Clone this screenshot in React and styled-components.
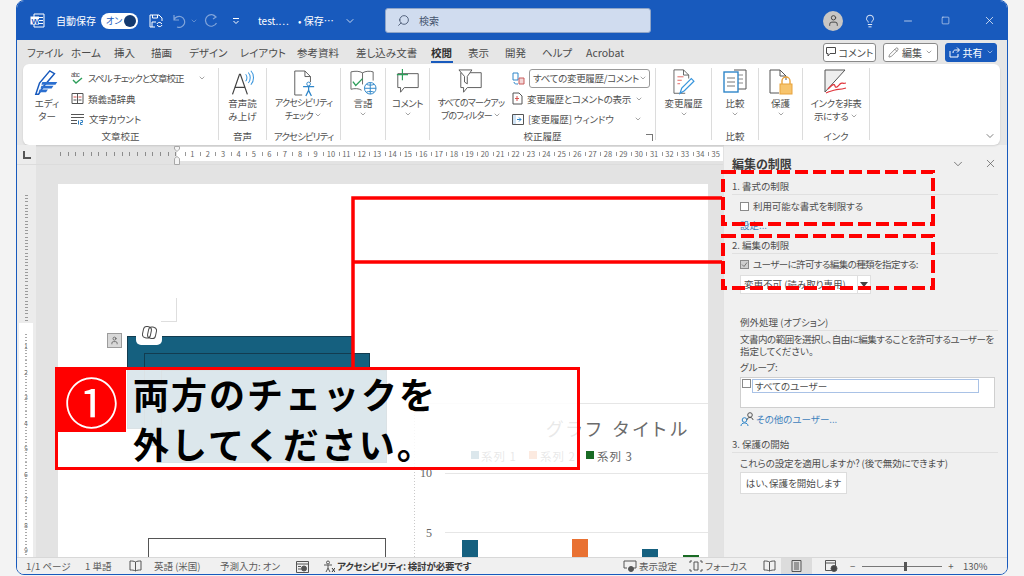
import styled, { createGlobalStyle } from "styled-components";
import { ChevronDown, X, Minus, Square, Lightbulb, Search, Pencil, User } from "lucide-react";

const GlobalStyle = createGlobalStyle`
  html, body {
    margin: 0;
    background: #f3f3f3;
  }
  * {
    box-sizing: border-box;
  }
  body {
    font-family: "Noto Sans CJK JP", "Noto Sans", sans-serif;
    font-feature-settings: "palt";
    color: #4a4a4a;
  }
`;

const Screen = styled.div`
  position: relative;
  width: 1024px;
  height: 576px;
  overflow: hidden;
  padding-left: 16px;
`;

const Window = styled.div`
  width: 992px;
  height: 575px;
  display: flex;
  flex-direction: column;
  border: 1px solid #185abd;
  border-radius: 8px;
  overflow: hidden;
  background: #f0f0f0;
`;

const TitleBar = styled.div`
  height: 39px;
  flex: none;
  display: flex;
  align-items: center;
  padding-left: 13px;
  background: #185abd;
  color: #fff;
  font-size: 10px;
`;

const Slot = styled.div`
  flex: none;
  width: ${(p) => p.$w}px;
  display: flex;
  align-items: center;
  white-space: nowrap;
  opacity: ${(p) => p.$dim || 1};
`;

const Spacer = styled.div`
  flex: 1;
`;

const Toggle = styled.div`
  width: 37px;
  height: 16px;
  border-radius: 8px;
  background: #fff;
  color: #185abd;
  font-size: 9px;
  display: flex;
  align-items: center;
  justify-content: space-between;
  padding: 0 2px 0 5px;
`;

const Knob = styled.span`
  width: 12px;
  height: 12px;
  border-radius: 50%;
  background: #143a70;
`;

const SearchBox = styled.div`
  flex: none;
  width: 266px;
  height: 25px;
  margin-right: 172px;
  display: flex;
  align-items: center;
  gap: 9px;
  padding-left: 11px;
  background: #d0dcef;
  border: 1px solid #8fa5c7;
  border-radius: 3px;
  color: #44546e;
  font-size: 10px;
`;

const Avatar = styled.div`
  width: 20px;
  height: 20px;
  border-radius: 50%;
  background: #c8c6c4;
  color: #444;
  display: flex;
  align-items: center;
  justify-content: center;
`;

const Chrome = styled.div`
  flex: none;
  background: #e6e6e6;
`;

const TabRow = styled.div`
  height: 24px;
  display: flex;
  align-items: center;
  padding-left: 10px;
  font-size: 10.5px;
  color: #4c4c4c;
`;

const Tab = styled.div`
  flex: none;
  width: ${(p) => p.$w}px;
  position: relative;
  white-space: nowrap;
  font-weight: ${(p) => (p.$active ? 700 : 400)};
  color: ${(p) => (p.$active ? "#2f2f2f" : "inherit")};

  ${(p) =>
    p.$active &&
    `&::after {
      content: "";
      position: absolute;
      left: 0;
      bottom: -3px;
      width: 22px;
      height: 2px;
      background: #185abd;
    }`}
`;

const TabActions = styled.div`
  margin-left: auto;
  margin-right: 10px;
  display: flex;
  gap: 7px;
`;

const ActionButton = styled.div`
  width: ${(p) => p.$w}px;
  height: 19px;
  display: flex;
  align-items: center;
  justify-content: center;
  gap: 3px;
  font-size: 10px;
  border-radius: 3px;
  background: ${(p) => (p.$primary ? "#185abd" : "#fff")};
  color: ${(p) => (p.$primary ? "#fff" : "#4a4a4a")};
  border: 1px solid ${(p) => (p.$primary ? "#185abd" : "#8a8a8a")};
`;

const Ribbon = styled.div`
  height: 81px;
  width: 977px;
  margin-left: 6px;
  display: flex;
  position: relative;
  padding: 4px 0 2px;
  background: #fff;
  border-radius: 6px;
  box-shadow: 0 1px 2px rgba(0, 0, 0, 0.12);
`;

const Group = styled.div`
  flex: none;
  width: ${(p) => p.$w}px;
  margin-bottom: 3px;
  display: flex;
  flex-direction: column;
  border-right: ${(p) => (p.$last ? "none" : "1px solid #dcdcdc")};
  position: relative;
`;

const GroupBody = styled.div`
  flex: 1;
  display: flex;
  justify-content: ${(p) => p.$justify || "center"};
  min-height: 0;
`;

const GroupLabel = styled.div`
  height: 13px;
  margin-bottom: -3px;
  line-height: 13px;
  font-size: 9.5px;
  letter-spacing: ${(p) => p.$ls || 0}px;
  text-align: center;
  white-space: nowrap;
  color: #4f4f4f;
`;

const BigButton = styled.div`
  flex: none;
  width: ${(p) => p.$w || 44}px;
  display: flex;
  flex-direction: column;
  align-items: center;
  font-size: ${(p) => p.$size || 9.5}px;
  letter-spacing: ${(p) => p.$ls || 0}px;
  line-height: 12.5px;
  text-align: center;
  white-space: nowrap;
  color: #4f4f4f;
`;

const BigIcon = styled.div`
  height: 29px;
  display: flex;
  align-items: flex-start;
  justify-content: center;
  padding-top: 1px;
`;

const ToolList = styled.div`
  flex: 1;
  display: flex;
  flex-direction: column;
`;

const ToolRow = styled.div`
  height: 20.5px;
  display: flex;
  align-items: center;
  gap: 4px;
  font-size: 9.5px;
  letter-spacing: ${(p) => p.$ls || 0}px;
  white-space: nowrap;
  color: #4f4f4f;
`;

const ToolChevron = styled.span`
  margin-left: auto;
  margin-right: ${(p) => p.$mr || 10}px;
  display: flex;
`;

const Dropdown = styled.div`
  width: 121px;
  height: 19px;
  display: flex;
  align-items: center;
  justify-content: space-between;
  padding: 0 2px 0 3px;
  border: 1px solid #9a9a9a;
  border-radius: 3px;
`;

const Launcher = styled.div`
  position: absolute;
  right: 2px;
  bottom: -1px;
  width: 7px;
  height: 7px;
  border-left: 1px solid #777;
  border-bottom: 1px solid #777;
  transform: rotate(180deg);
`;

const RibbonCollapse = styled.div`
  position: absolute;
  right: 4px;
  bottom: 3px;
  display: flex;
  color: #555;
`;

const Main = styled.div`
  flex: 1;
  min-height: 0;
  display: flex;
`;

const DocArea = styled.div`
  flex: 1;
  min-width: 0;
  display: flex;
  flex-direction: column;
  background: #e3e3e3;
`;

const RulerRow = styled.div`
  height: 20px;
  flex: none;
  display: flex;
  align-items: flex-start;
  padding-top: 2px;
  position: relative;
  border-bottom: 1px solid #dcdcdc;
`;

const RulerCorner = styled.div`
  width: 19px;
  height: 19px;
  margin: -2px 24px 0 0;
  display: flex;
  align-items: center;
  justify-content: center;
  background: #ececec;

  &::after {
    content: "";
    width: 6px;
    height: 6px;
    border-left: 2px solid #555;
    border-bottom: 2px solid #555;
  }
`;

const RulerMargin = styled.div`
  width: 117px;
  height: 14px;
  flex: none;
  background: repeating-linear-gradient(90deg, #8c8c8c 0 1px, transparent 1px 7.7px) center / 100% 4px no-repeat;
`;

const RulerActive = styled.div`
  flex: 1;
  height: 14px;
  display: flex;
  padding-left: 7.7px;
  overflow: hidden;
  background: #fff;
`;

const RulerCell = styled.div`
  flex: none;
  width: 15.4px;
  text-align: center;
  font-size: 7.5px;
  line-height: 14px;
  color: #666;
  background: linear-gradient(#999, #999) 0 center / 1px 4px no-repeat;
`;

const IndentMark = styled.svg`
  position: absolute;
  left: 155px;
  top: 0;
`;

const DocBody = styled.div`
  flex: 1;
  min-height: 0;
  display: flex;
`;

const VRuler = styled.div`
  flex: none;
  width: 19px;
  margin-right: 22px;
  padding: 30px 3px 0 2px;
  display: flex;
  flex-direction: column;
  background: #ececec;
`;

const VRulerMargin = styled.div`
  height: 128px;
  flex: none;
  background: repeating-linear-gradient(#9a9a9a 0 1px, transparent 1px 3.2px) center / 3px 100% no-repeat;
`;

const VRulerActive = styled.div`
  flex: 1;
  background: #fff;
  display: flex;
  flex-direction: column;
  padding-top: 11px;
`;

const VRulerCell = styled.div`
  height: 25.5px;
  flex: none;
  font-size: 7px;
  line-height: 25.5px;
  text-align: center;
  color: #777;
  background: repeating-linear-gradient(#a8a8a8 0 1px, transparent 1px 3.2px) center / 2px 100% no-repeat;
`;

const PageWrap = styled.div`
  flex: 1;
  min-width: 0;
  padding: 19px 15px 0 0;
`;

const Page = styled.div`
  position: relative;
  height: 100%;
  background: #fff;
  overflow: hidden;
`;

const CropMark = styled.div`
  position: absolute;
  left: 103px;
  top: 114px;
  width: 16px;
  height: 24px;
  border-right: 1px solid #dedede;
  border-bottom: 1px solid #dedede;
`;

const LayoutIcon = styled.div`
  position: absolute;
  left: 49px;
  top: 149px;
  width: 15px;
  height: 15px;
  background: #d8d8d8;
  border: 1px solid #9c9c9c;
  display: flex;
  align-items: center;
  justify-content: center;
  color: #555;
`;

const StackShape = styled.div`
  position: absolute;
  left: ${(p) => 69 + p.$step * 17}px;
  top: ${(p) => 152 + p.$step * 17}px;
  width: 226px;
  height: 93px;
  background: #15607f;
  border: 1px solid #123c50;
`;

const CopilotTab = styled.div`
  position: absolute;
  left: 78px;
  top: 150px;
  width: 26px;
  height: 11px;
  background: #fff;
  border-radius: 0 0 5px 5px;
`;

const CopilotIcon = styled.svg`
  position: absolute;
  left: 84px;
  top: 141px;
`;

const LowerShape = styled.div`
  position: absolute;
  left: 90px;
  top: 354px;
  width: 238px;
  height: 40px;
  border: 1.5px solid #555;
`;

const ChartFrame = styled.svg`
  position: absolute;
  left: 356px;
  top: 219px;
`;

const Pane = styled.div`
  flex: none;
  width: 284px;
  padding: 10px 9px 0 8px;
  background: #f0f0f0;
  border-left: 1px solid #e2e2e2;
  font-size: 9.5px;
  color: #4d4d4d;
`;

const PaneHeader = styled.div`
  height: 17px;
  display: flex;
  align-items: center;
  color: #3c3c3c;
  font-size: 12px;
  font-weight: 700;
`;

const PaneTools = styled.div`
  margin-left: auto;
  margin-right: 1px;
  display: flex;
  gap: 19px;
  color: #555;
`;

const SectionHead = styled.div`
  margin-top: ${(p) => p.$mt}px;
  height: 15px;
  line-height: 13px;
  font-size: 9.5px;
  border-bottom: 1px solid #e0e0e0;
  white-space: nowrap;
`;

const Indented = styled.div`
  padding-left: 8px;
  margin-top: ${(p) => p.$mt || 0}px;
  line-height: 12px;
  letter-spacing: ${(p) => p.$ls || 0}px;
  white-space: nowrap;
`;

const SubHead = styled(SectionHead)`
  margin-left: 8px;
`;

const CheckRow = styled(Indented)`
  display: flex;
  align-items: center;
  gap: 4px;
`;

const CheckBox = styled.span`
  flex: none;
  width: 9px;
  height: 9px;
  display: flex;
  align-items: center;
  justify-content: center;
  background: ${(p) => (p.$checked ? "#cfcfcf" : "#fff")};
  border: 1px solid #8a8a8a;
  color: #777;
`;

const PaneLink = styled(Indented)`
  color: #3f82bd;
`;

const SelectBox = styled.div`
  margin: 5px 0 0 8px;
  width: 131px;
  height: 19px;
  display: flex;
  background: #fff;
  border: 1px solid #dfdfdf;
  line-height: 17px;
  padding-left: 3px;
  white-space: nowrap;
`;

const SelectArrow = styled.span`
  margin-left: auto;
  width: 13px;
  display: flex;
  align-items: center;
  justify-content: center;
  border-left: 1px solid #dfdfdf;

  &::after {
    content: "";
    border: 4px solid transparent;
    border-top: 5px solid #444;
    border-bottom: 0;
  }
`;

const GroupBox = styled.div`
  margin: 4px 3px 0 8px;
  height: 31px;
  display: flex;
  align-items: flex-start;
  gap: 1px;
  padding: 1px 15px 0 1px;
  background: #fff;
  border: 1px solid #cfcfcf;
`;

const GroupInput = styled.div`
  flex: 1;
  height: 14px;
  line-height: 12px;
  padding-left: 2px;
  border: 1px solid #a9c2e6;
`;

const UsersLink = styled(PaneLink)`
  display: flex;
  align-items: center;
  gap: 1px;
`;

const PaneButton = styled.div`
  margin: 3px 0 0 8px;
  width: 107px;
  height: 22px;
  line-height: 20px;
  text-align: center;
  background: #fff;
  border: 1px solid #dcdcdc;
  white-space: nowrap;
`;

const StatusBar = styled.div`
  height: 17px;
  flex: none;
  display: flex;
  align-items: center;
  padding-left: 9px;
  background: #f0f0f0;
  border-top: 1px solid #d8d8d8;
  font-size: 9.5px;
  color: #5a5a5a;
`;

const StatusItem = styled.div`
  flex: ${(p) => (p.$w ? "none" : "1")};
  width: ${(p) => (p.$w ? `${p.$w}px` : "auto")};
  height: 100%;
  display: flex;
  align-items: center;
  gap: 2px;
  white-space: nowrap;
  font-weight: ${(p) => (p.$bold ? 700 : 400)};
  letter-spacing: ${(p) => (p.$bold ? -0.2 : 0)}px;
  color: ${(p) => (p.$bold ? "#3a3a3a" : "inherit")};
`;

const ViewTile = styled(StatusItem)`
  justify-content: center;
  background: ${(p) => (p.$active ? "#dcdcdc" : "transparent")};
`;

const ZoomTrack = styled.div`
  flex: none;
  width: 80px;
  height: 1px;
  margin: 0 4px 0 5px;
  position: relative;
  background: #777;
`;

const ZoomThumb = styled.span`
  position: absolute;
  left: 42px;
  top: -4px;
  width: 3px;
  height: 9px;
  background: #555;
`;

const Overlay = styled.svg`
  position: absolute;
  left: 0;
  top: 0;
  pointer-events: none;
`;

const Callout = styled.div`
  position: absolute;
  left: 55px;
  top: 367px;
  width: 525px;
  height: 103px;
  display: flex;
  align-items: flex-start;
  background: rgba(255, 255, 255, 0.85);
  border: 3px solid #ff0000;
`;

const CalloutNumber = styled.div`
  flex: none;
  width: 69px;
  height: 63px;
  margin: -1px 0 0 -1px;
  display: flex;
  align-items: center;
  justify-content: center;
  background: #ff0000;
  color: #fff;
  font-size: 54px;
  line-height: 1;
`;

const CalloutText = styled.div`
  margin-top: -2px;
  padding-left: 7px;
  color: #000;
  font-size: 36px;
  font-weight: 700;
  line-height: 50px;
  letter-spacing: 2px;
  white-space: nowrap;
  font-feature-settings: normal;
`;

const Chev = ({ size = 9, color = "#555" }) => <ChevronDown size={size} color={color} strokeWidth={1.6} />;

const WordLogo = () => (
  <svg width="15" height="15" viewBox="0 0 15 15">
    <path d="M4 1h10v13H4z" fill="#185abd" stroke="#fff" />
    <path d="M9 4.500h4M9 7.500h4M9 10.500h4" stroke="#fff" />
    <rect x="0.500" y="3.500" width="8.500" height="8" fill="#fff" />
    <text x="1.500" y="10.500" fontSize="8" fontWeight="700" fill="#185abd" fontFamily="Liberation Sans">W</text>
  </svg>
);

const SaveIcon = () => (
  <svg width="14" height="14" viewBox="0 0 14 14" fill="none" stroke="#fff" strokeWidth="1">
    <path d="M1 1h9l3 3v3M1 1v12h5M3.500 1v3h5V1M3 13V8h4" />
    <path d="M8 10a2.500 2.500 0 0 1 4-1l1 1M13 11a2.500 2.500 0 0 1-4 1l-1-1" />
  </svg>
);

const UndoIcon = () => (
  <svg width="13" height="14" viewBox="0 0 13 14" fill="none" stroke="#fff" strokeWidth="1.2">
    <path d="M1 1v5h5M1 6a5.500 5.500 0 1 1 3 7" />
  </svg>
);

const RedoIcon = () => (
  <svg width="14" height="14" viewBox="0 0 14 14" fill="none" stroke="#fff" strokeWidth="1.200">
    <path d="M9 1l3 2-3 2M12 3A5.800 5.800 0 1 0 12.500 9" />
  </svg>
);

const QatIcon = () => (
  <svg width="8" height="8" viewBox="0 0 8 8" fill="none" stroke="#fff">
    <path d="M1 1.500h6M1.500 4L4 6.500 6.500 4" />
  </svg>
);

const EditorIcon = () => (
  <svg width="28" height="28" viewBox="0 0 28 30" fill="none">
    <path d="M2 27L6 15 17 2l5 3-12 14-5 8z" stroke="#185abd" strokeWidth="1.600" />
    <path d="M9 14h16l-2 3H8zM8 18h13l-2 3H7zM6 22h9l-2 3H5z" fill="#2b6fd0" />
  </svg>
);

const SpellIcon = () => (
  <svg width="13" height="14" viewBox="0 0 13 14" fill="none">
    <text x="0" y="6" fontSize="6.500" fill="#555" fontFamily="Liberation Sans">abc</text>
    <path d="M2 9l3 3 6-5" stroke="#2e9e5b" strokeWidth="1.400" />
  </svg>
);

const ThesaurusIcon = () => (
  <svg width="13" height="13" viewBox="0 0 13 13" fill="none" stroke="#555">
    <path d="M1 1.500h11v10H1zM6.500 1.500v10" />
    <path d="M2.500 5h3M7.500 5h3" stroke="#d9534f" />
    <path d="M2.500 8h3M7.500 8h3" />
  </svg>
);

const CountIcon = () => (
  <svg width="14" height="13" viewBox="0 0 14 13" fill="none" stroke="#555">
    <path d="M0 1.500h13M0 4.500h13M0 7.500h6M0 10.500h6" />
    <path d="M7.500 7.500v4M9.500 7.500h2v2h-2v2h2" stroke="#2f7fc1" />
  </svg>
);

const SpeakIcon = () => (
  <svg width="26" height="28" viewBox="0 0 28 32" fill="none">
    <path d="M2 29L10 6h1l8 23M5 21h11" stroke="#444" strokeWidth="1.400" />
    <path d="M17 6c2 2 2 6 0 8M20 4c3 3 3 9 0 12M23 2c4 4 4 12 0 16" stroke="#3a96dd" strokeWidth="1.200" />
  </svg>
);

const AccessIcon = () => (
  <svg width="24" height="28" viewBox="0 0 26 30" fill="none">
    <path d="M11 28H3V2h11l6 6v6M14 2v6h6" stroke="#555" />
    <circle cx="18" cy="16" r="2" stroke="#2f86c9" />
    <path d="M12 19h12M18 19v4l-3 6M18 23l3 6" stroke="#2f86c9" strokeWidth="1.400" />
  </svg>
);

const LanguageIcon = () => (
  <svg width="27" height="27" viewBox="0 0 28 28" fill="none">
    <path d="M13 4C10 2 5 2 1 3v18c4-1 8-1 11 1M13 4c3-2 8-2 11-1v9M13 4v12" stroke="#666" />
    <path d="M3 13l3 4 7-7" stroke="#2e9e5b" strokeWidth="1.400" />
    <circle cx="21" cy="20" r="6" fill="#fff" stroke="#2f86c9" />
    <path d="M15 20h12M21 14v12M17 16c3 1 5 1 8 0M17 24c3-1 5-1 8 0" stroke="#2f86c9" />
  </svg>
);

const CommentIcon = () => (
  <svg width="26" height="26" viewBox="0 0 28 28" fill="none">
    <path d="M3 5h22v15H10l-4 5v-5H3z" stroke="#555" />
    <path d="M8 0v12M2 6h12" stroke="#2e9e5b" strokeWidth="1.300" />
  </svg>
);

const FilterIcon = () => (
  <svg width="26" height="26" viewBox="0 0 28 28" fill="none">
    <path d="M3 4h22v16H10l-4 5v-5H3z" stroke="#555" />
    <path d="M1 1h14l-5 7v8l-3-2V8z" fill="#fff" stroke="#555" />
  </svg>
);

const TrackIcon = () => (
  <svg width="23" height="26" viewBox="0 0 24 30" fill="none">
    <path d="M14 28H1V1h11l6 6v4M12 1v6h6" stroke="#555" />
    <path d="M5 9h7M5 13h5M5 17h3" stroke="#e0544f" />
    <path d="M8 28l2-6 11-11 3 3-11 11z" fill="#fff" stroke="#3a96dd" strokeWidth="1.400" />
  </svg>
);

const CompareIcon = () => (
  <svg width="24" height="24" viewBox="0 0 24 24" fill="none">
    <path d="M11 1h12v19H15" stroke="#555" />
    <path d="M15 6h5M15 10h5M15 14h5" stroke="#888" />
    <rect x="1" y="3" width="14" height="20" fill="#fff" stroke="#2f86c9" strokeWidth="1.400" />
    <path d="M4 9h8M4 13h8M4 17h8" stroke="#777" />
  </svg>
);

const ProtectIcon = () => (
  <svg width="24" height="26" viewBox="0 0 24 26" fill="none">
    <path d="M10 24H1V1h10l6 6v4M11 1v6h6" stroke="#555" />
    <path d="M13 15v-3a4 4 0 0 1 8 0v3" stroke="#e8a33d" strokeWidth="1.400" />
    <rect x="11" y="15" width="12" height="10" fill="#f7c46c" stroke="#e8a33d" />
  </svg>
);

const InkIcon = () => (
  <svg width="26" height="26" viewBox="0 0 26 26" fill="none">
    <path d="M2 1h20L2 23z" fill="#eee" stroke="#555" />
    <path d="M5 20c4-4 6-6 7-3s3 0 5-2 2 0 6-1M3 24c4-2 6-2 9-3s4 0 11-2" stroke="#e0343b" strokeWidth="1.200" />
  </svg>
);

const TrackSmallIcon = () => (
  <svg width="13" height="13" viewBox="0 0 13 13" fill="none">
    <path d="M1 1h5v7H1z" stroke="#2f86c9" />
    <path d="M7 6h5v6H7z" fill="#f3d6d6" stroke="#c85a5a" />
    <path d="M2 10c0 2 2 2 4 2" stroke="#2f86c9" />
  </svg>
);

const DocMarkIcon = () => (
  <svg width="11" height="13" viewBox="0 0 11 13" fill="none">
    <path d="M1 1h6l3 3v8H1z" stroke="#555" />
    <path d="M5 4v5M3 6.500h4" stroke="#d9534f" />
  </svg>
);

const PaneIcon = () => (
  <svg width="12" height="11" viewBox="0 0 12 11" fill="none">
    <path d="M.5.500h11v10H.5z" stroke="#555" />
    <path d="M1 1h3v9H1z" fill="#cfe3f5" />
    <path d="M5 5.500h4M7 3.500l2 2-2 2" stroke="#2f86c9" />
  </svg>
);

const CopilotGlyph = () => (
  <CopilotIcon width="15" height="15" viewBox="0 0 15 15" fill="none" stroke="#4a4a4a" strokeWidth="1">
    <rect x="1" y="1.500" width="8" height="11.500" rx="3.500" transform="rotate(12 5 7)" />
    <rect x="6" y="2" width="8" height="11.500" rx="3.500" transform="rotate(12 10 8)" />
  </CopilotIcon>
);

const BookIcon = ({ stroke = "#555" }) => (
  <svg width="13" height="12" viewBox="0 0 13 12" fill="none" stroke={stroke}>
    <path d="M6.500 2C5 1 3 1 1 1v9c2 0 4 0 5.500 1C8 10 10 10 12 10V1c-2 0-4 0-5.500 1zM6.500 2v9" />
  </svg>
);

const MacroIcon = () => (
  <svg width="13" height="13" viewBox="0 0 13 13" fill="none" stroke="#555">
    <path d="M.5 1.500h12v11H.5zM.5 4h12" />
    <circle cx="8" cy="8.500" r="2.500" fill="#555" />
    <path d="M2 6.500h3M2 9h3" />
  </svg>
);

const AccessStatusIcon = () => (
  <svg width="12" height="13" viewBox="0 0 12 13" fill="none" stroke="#555">
    <circle cx="5" cy="2.500" r="1.500" />
    <path d="M1 5h8M5 5v3L3 12M5 8l2 4" />
    <path d="M9 8l3 4M12 8l-3 4" stroke="#333" />
  </svg>
);

const DisplayIcon = () => (
  <svg width="14" height="12" viewBox="0 0 14 12" fill="none" stroke="#555">
    <path d="M1 1h12v7H7M1 1v7h3" />
    <circle cx="8" cy="9" r="2.500" fill="#555" />
  </svg>
);

const FocusIcon = () => (
  <svg width="14" height="12" viewBox="0 0 14 12" fill="none" stroke="#555">
    <path d="M1 3V1h2M11 1h2v2M13 9v2h-2M3 11H1V9" />
    <path d="M5 2h4v8H5z" />
  </svg>
);

const PrintIcon = () => (
  <svg width="11" height="12" viewBox="0 0 11 12" fill="none" stroke="#555">
    <path d="M1 .500h9v11H1zM3 3h5M3 5h5M3 7h5M3 9h5" />
  </svg>
);

const WebIcon = () => (
  <svg width="13" height="12" viewBox="0 0 13 12" fill="none" stroke="#555">
    <path d="M.5.500h10v10H.5zM.5 3h10" />
    <circle cx="9" cy="8.500" r="3" fill="#444" />
  </svg>
);

const UsersIcon = () => (
  <svg width="15" height="14" viewBox="0 0 15 14" fill="none">
    <circle cx="4.500" cy="8" r="2.300" stroke="#2f86c9" />
    <path d="M1 14c0-2 1.500-3 3.500-3S8 12 8 14" stroke="#2f86c9" />
    <circle cx="10" cy="3" r="2.300" stroke="#555" />
    <path d="M7 8c0-1.500 1.300-2.500 3-2.500s3 1 3 2.500" stroke="#555" />
  </svg>
);

const TABS = [
  ["ファイル", 44], ["ホーム", 43], ["挿入", 37], ["描画", 38], ["デザイン", 51], ["レイアウト", 57],
  ["参考資料", 59], ["差し込み文書", 75], ["校閲", 37], ["表示", 37], ["開発", 37], ["ヘルプ", 44], ["Acrobat", 50],
];

const rulerNumbers = Array.from({ length: 35 }, (_, i) => i + 1);
const vRulerNumbers = [1, 2, 3, 4, 5, 6, 7, 8, 9];

function Chart() {
  return (
    <ChartFrame width="294" height="154" viewBox="0 0 294 154" fontFamily="Noto Sans CJK JP, sans-serif">
      <path d="M0 .500H294" stroke="#e6e6e6" />
      <path d="M.500 0V154" stroke="#c9c9c9" strokeDasharray="1 2" />
      <text x="132" y="33" fontSize="18" letterSpacing="4" fill="#6b6b6b">グラフ タイトル</text>
      <rect x="57" y="48" width="8" height="8" fill="#15607f" />
      <text x="67" y="58" fontSize="11.500" letterSpacing="1" fill="#666">系列 1</text>
      <rect x="115" y="48" width="8" height="8" fill="#e97132" />
      <text x="126" y="58" fontSize="11.500" letterSpacing="1" fill="#666">系列 2</text>
      <rect x="172" y="48" width="8" height="8" fill="#196b24" />
      <text x="183" y="58" fontSize="11.500" letterSpacing="1" fill="#666">系列 3</text>
      <text x="6" y="74" fontSize="12" fill="#666" fontFamily="Liberation Serif">10</text>
      <text x="12" y="134" fontSize="12" fill="#666" fontFamily="Liberation Serif">5</text>
      <path d="M31 70.500H294M31 129.500H294" stroke="#e6e6e6" />
      <rect x="48" y="137" width="16" height="20" fill="#15607f" />
      <rect x="158" y="136" width="16" height="20" fill="#e97132" />
      <rect x="228" y="146" width="16" height="10" fill="#15607f" />
      <rect x="269" y="152" width="16" height="4" fill="#196b24" />
    </ChartFrame>
  );
}

export default function App() {
  return (
    <Screen>
      <GlobalStyle />
      <Window>
        <TitleBar>
          <Slot $w={26}><WordLogo /></Slot>
          <Slot $w={45}>自動保存</Slot>
          <Slot $w={48}>
            <Toggle>オン<Knob /></Toggle>
          </Slot>
          <Slot $w={24}><SaveIcon /></Slot>
          <Slot $w={17} $dim={0.45}><UndoIcon /></Slot>
          <Slot $w={14} $dim={0.45}><ChevronDown size={8} /></Slot>
          <Slot $w={28} $dim={0.45}><RedoIcon /></Slot>
          <Slot $w={26}><QatIcon /></Slot>
          <Slot $w={40}>test.…</Slot>
          <Slot $w={46}>• 保存…</Slot>
          <Slot $w={41}><ChevronDown size={12} strokeWidth={1.5} /></Slot>
          <SearchBox>
            <Search size={13} strokeWidth={1.6} style={{ transform: "scaleX(-1)" }} />
            検索
          </SearchBox>
          <Slot $w={37}>
            <Avatar><User size={13} strokeWidth={1.8} /></Avatar>
          </Slot>
          <Slot $w={39}><Lightbulb size={14} strokeWidth={1.5} style={{ marginLeft: 3 }} /></Slot>
          <Slot $w={39}><Minus size={12} strokeWidth={1.3} style={{ marginLeft: 3 }} /></Slot>
          <Slot $w={42}><Square size={9} strokeWidth={1.4} style={{ marginLeft: 3 }} /></Slot>
          <Slot $w={20}><X size={13} strokeWidth={1.3} style={{ marginLeft: 3 }} /></Slot>
          <Spacer />
        </TitleBar>

        <Chrome>
          <TabRow>
            {TABS.map(([label, w]) => (
              <Tab key={label} $w={w} $active={label === "校閲"}>{label}</Tab>
            ))}
            <TabActions>
              <ActionButton $w={53}>
                <svg width="10" height="10" viewBox="0 0 10 10" fill="none" stroke="#4a4a4a">
                  <path d="M.5.500h9v6H4L2 9V6.500H.5z" />
                </svg>
                コメント
              </ActionButton>
              <ActionButton $w={55}>
                <Pencil size={11} strokeWidth={1.3} />編集<Chev size={8} />
              </ActionButton>
              <ActionButton $w={52} $primary>
                <svg width="11" height="11" viewBox="0 0 11 11" fill="none" stroke="#fff">
                  <path d="M8 .5l2.500 2.500L8 5.500M10 3H6.500C5 3 4 4 4 6M1 4v6h8V7" />
                </svg>
                共有<Chev size={8} color="#fff" />
              </ActionButton>
            </TabActions>
          </TabRow>

          <Ribbon>
            <Group $w={196}>
              <GroupBody $justify="flex-start">
                <BigButton $w={48}>
                  <BigIcon><EditorIcon /></BigIcon>
                  エディ<br />ター
                </BigButton>
                <ToolList>
                  <ToolRow $ls={-0.9}><SpellIcon />スペル チェックと文章校正<ToolChevron $mr={12}><Chev size={8} /></ToolChevron></ToolRow>
                  <ToolRow><ThesaurusIcon />類義語辞典</ToolRow>
                  <ToolRow><CountIcon />文字カウント</ToolRow>
                </ToolList>
              </GroupBody>
              <GroupLabel>文章校正</GroupLabel>
            </Group>

            <Group $w={48}>
              <GroupBody>
                <BigButton>
                  <BigIcon><SpeakIcon /></BigIcon>
                  音声読<br />み上げ
                </BigButton>
              </GroupBody>
              <GroupLabel>音声</GroupLabel>
            </Group>

            <Group $w={74}>
              <GroupBody>
                <BigButton $w={70} $size={9} $ls={-0.7}>
                  <BigIcon><AccessIcon /></BigIcon>
                  アクセシビリティ<br /><span>チェック <Chev size={8} /></span>
                </BigButton>
              </GroupBody>
              <GroupLabel $ls={-0.9}>アクセシビリティ</GroupLabel>
            </Group>

            <Group $w={45}>
              <GroupBody>
                <BigButton>
                  <BigIcon><LanguageIcon /></BigIcon>
                  言語<br /><Chev size={8} />
                </BigButton>
              </GroupBody>
              <GroupLabel>&nbsp;</GroupLabel>
            </Group>

            <Group $w={44}>
              <GroupBody>
                <BigButton $ls={-0.5}>
                  <BigIcon><CommentIcon /></BigIcon>
                  コメント<br /><Chev size={8} />
                </BigButton>
              </GroupBody>
              <GroupLabel>&nbsp;</GroupLabel>
            </Group>

            <Group $w={226}>
              <GroupBody $justify="flex-start">
                <BigButton $w={82} $size={9} $ls={-0.8}>
                  <BigIcon><FilterIcon /></BigIcon>
                  すべてのマークアッ<br /><span>プのフィルター <Chev size={8} /></span>
                </BigButton>
                <ToolList>
                  <ToolRow $ls={-0.3}>
                    <TrackSmallIcon />
                    <Dropdown>すべての変更履歴/コメント<Chev size={8} /></Dropdown>
                  </ToolRow>
                  <ToolRow $ls={-0.3}><DocMarkIcon />変更履歴とコメントの表示<ToolChevron $mr={14}><Chev size={8} /></ToolChevron></ToolRow>
                  <ToolRow $ls={-0.1}><PaneIcon />[変更履歴] ウィンドウ<ToolChevron $mr={15}><Chev size={8} /></ToolChevron></ToolRow>
                </ToolList>
              </GroupBody>
              <GroupLabel>校正履歴</GroupLabel>
              <Launcher />
            </Group>

            <Group $w={56}>
              <GroupBody>
                <BigButton>
                  <BigIcon><TrackIcon /></BigIcon>
                  変更履歴<br /><Chev size={8} />
                </BigButton>
              </GroupBody>
              <GroupLabel>&nbsp;</GroupLabel>
            </Group>

            <Group $w={47}>
              <GroupBody>
                <BigButton>
                  <BigIcon><CompareIcon /></BigIcon>
                  比較<br /><Chev size={8} />
                </BigButton>
              </GroupBody>
              <GroupLabel>比較</GroupLabel>
            </Group>

            <Group $w={44}>
              <GroupBody>
                <BigButton>
                  <BigIcon><ProtectIcon /></BigIcon>
                  保護<br /><Chev size={8} />
                </BigButton>
              </GroupBody>
              <GroupLabel>&nbsp;</GroupLabel>
            </Group>

            <Group $w={67}>
              <GroupBody>
                <BigButton $w={62} $ls={-0.4}>
                  <BigIcon><InkIcon /></BigIcon>
                  インクを非表<br /><span>示にする <Chev size={8} /></span>
                </BigButton>
              </GroupBody>
              <GroupLabel>インク</GroupLabel>
            </Group>

            <RibbonCollapse><ChevronDown size={12} strokeWidth={1.5} /></RibbonCollapse>
          </Ribbon>
        </Chrome>

        <Main>
          <DocArea>
            <RulerRow>
              <RulerCorner />
              <RulerMargin />
              <RulerActive>
                {rulerNumbers.map((n) => (
                  <RulerCell key={n}>{n}</RulerCell>
                ))}
              </RulerActive>
              <IndentMark width="10" height="20" viewBox="0 0 10 20" fill="#f4f4f4" stroke="#a8a8a8">
                <path d="M2.500 1.500h5V4L5 6.500 2.500 4zM2.500 19.500v-6L5 11.500l2.500 2v6z" />
              </IndentMark>
            </RulerRow>
            <DocBody>
              <VRuler>
                <VRulerMargin />
                <VRulerActive>
                  {vRulerNumbers.map((n) => (
                    <VRulerCell key={n}>{n}</VRulerCell>
                  ))}
                </VRulerActive>
              </VRuler>
              <PageWrap>
                <Page>
                  <CropMark />
                  <LayoutIcon><User size={9} /></LayoutIcon>
                  <StackShape $step={0} />
                  <StackShape $step={1} />
                  <StackShape $step={2} />
                  <CopilotTab />
                  <CopilotGlyph />
                  <LowerShape />
                  <Chart />
                </Page>
              </PageWrap>
            </DocBody>
          </DocArea>

          <Pane>
            <PaneHeader>
              編集の制限
              <PaneTools>
                <ChevronDown size={14} strokeWidth={1.3} />
                <X size={13} strokeWidth={1.3} />
              </PaneTools>
            </PaneHeader>
            <SectionHead $mt={8}>1. 書式の制限</SectionHead>
            <CheckRow $mt={5} $ls={-0.1}><CheckBox />利用可能な書式を制限する</CheckRow>
            <PaneLink $mt={7}>設定...</PaneLink>
            <SectionHead $mt={8}>2. 編集の制限</SectionHead>
            <CheckRow $mt={4} $ls={-0.6}>
              <CheckBox $checked>
                <svg width="7" height="7" viewBox="0 0 7 7" fill="none" stroke="#777"><path d="M1 3.500l2 2 3-4" /></svg>
              </CheckBox>
              ユーザーに許可する編集の種類を指定する:
            </CheckRow>
            <SelectBox>変更不可 (読み取り専用)<SelectArrow /></SelectBox>
            <SubHead $mt={22}>例外処理 (オプション)</SubHead>
            <Indented $mt={2} $ls={-0.5}>文書内の範囲を選択し、自由に編集することを許可するユーザーを</Indented>
            <Indented>指定してください。</Indented>
            <Indented $mt={4}>グループ:</Indented>
            <GroupBox>
              <CheckBox />
              <GroupInput>すべてのユーザー</GroupInput>
            </GroupBox>
            <UsersLink $mt={4}><UsersIcon />その他のユーザー...</UsersLink>
            <SectionHead $mt={12}>3. 保護の開始</SectionHead>
            <Indented $mt={4} $ls={-0.1}>これらの設定を適用しますか? (後で無効にできます)</Indented>
            <PaneButton>はい、保護を開始します</PaneButton>
          </Pane>
        </Main>

        <StatusBar>
          <StatusItem $w={59}>1/1 ページ</StatusItem>
          <StatusItem $w={44}>1 単語</StatusItem>
          <StatusItem $w={25}><BookIcon /></StatusItem>
          <StatusItem $w={66}>英語 (米国)</StatusItem>
          <StatusItem $w={76}>予測入力: オン</StatusItem>
          <StatusItem $w={27}><MacroIcon /></StatusItem>
          <StatusItem $bold><AccessStatusIcon />アクセシビリティ: 検討が必要です</StatusItem>
          <StatusItem $w={66}><DisplayIcon />表示設定</StatusItem>
          <StatusItem $w={68}><FocusIcon />フォーカス</StatusItem>
          <ViewTile $w={24}><BookIcon /></ViewTile>
          <ViewTile $w={31} $active><PrintIcon /></ViewTile>
          <ViewTile $w={38}><WebIcon /></ViewTile>
          <StatusItem $w={113}>
            −<ZoomTrack><ZoomThumb /></ZoomTrack>+
          </StatusItem>
          <StatusItem $w={44}>130%</StatusItem>
        </StatusBar>
      </Window>

      <Overlay width="1024" height="576" viewBox="0 0 1024 576" fill="none">
        <path d="M353 367V198H722M353 262H722" stroke="#f00" strokeWidth="3.500" />
        <rect x="723" y="172" width="210" height="52" stroke="#f00" strokeWidth="4" strokeDasharray="13 5" />
        <rect x="723" y="236" width="210" height="52" stroke="#f00" strokeWidth="4" strokeDasharray="13 5" />
      </Overlay>

      <Callout>
        <CalloutNumber>①</CalloutNumber>
        <CalloutText>両方のチェックを<br />外してください。</CalloutText>
      </Callout>
    </Screen>
  );
}
